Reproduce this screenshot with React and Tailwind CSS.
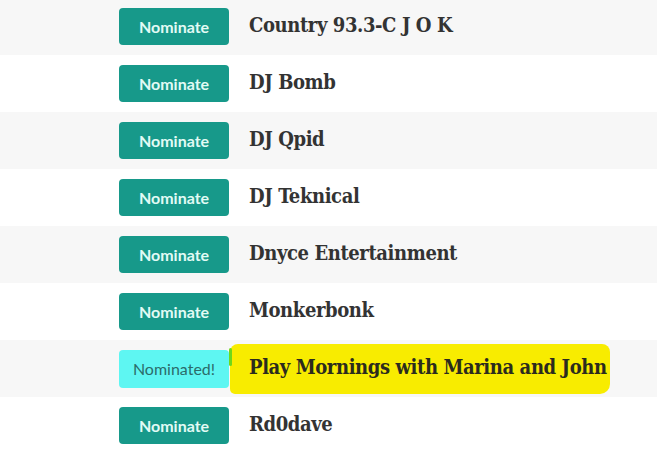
const names = [
  'Country 93.3-C J O K',
  'DJ Bomb',
  'DJ Qpid',
  'DJ Teknical',
  'Dnyce Entertainment',
  'Monkerbonk',
  'Play Mornings with Marina and John',
  'Rd0dave',
];

const nominated = 'Play Mornings with Marina and John';

export default function App() {
  return (
    <div className="w-[657px] h-[450px] overflow-hidden bg-white">
      <div className="-mt-[2px]">
        {names.map((name, i) => {
          const isNominated = name === nominated;
          return (
            <div
              key={name}
              className={`flex items-center h-[57px] pl-[119px] ${i % 2 === 0 ? 'bg-[#f7f7f7]' : 'bg-white'}`}
            >
              {isNominated ? (
                <button className="w-[110px] h-[38px] rounded-[4px] bg-[#5ef6f2] text-[#2c6c6a] text-[16px] font-['Lato',sans-serif]">
                  Nominated!
                </button>
              ) : (
                <button className="w-[110px] h-[37px] rounded-[4px] bg-[#17998a] text-[#e2fbf5] text-[16px] font-bold font-['Lato',sans-serif]">
                  Nominate
                </button>
              )}
              {isNominated ? (
                <div className="relative ml-[1px] flex items-center h-[50px] pl-[19px] pr-[3px] pb-[4px]">
                  <div className="absolute inset-0 bg-[#f8ec00] rounded-tl-[8px] rounded-bl-[5px] rounded-tr-[8px] rounded-br-[10px]" />
                  <div className="absolute left-[-1px] top-[4px] w-[3px] h-[18px] bg-[#6fd81a] rounded-full" />
                  <span className="relative text-[20px] font-bold text-[#2b2b1e] font-['DejaVu_Serif_Condensed','DejaVu_Serif',serif] tracking-[-0.4px]">
                    {name}
                  </span>
                </div>
              ) : (
                <span className="ml-[20px] pb-[4px] text-[20px] font-bold text-[#333333] font-['DejaVu_Serif_Condensed','DejaVu_Serif',serif] tracking-[-0.4px]">
                  {name}
                </span>
              )}
            </div>
          );
        })}
      </div>
    </div>
  );
}
